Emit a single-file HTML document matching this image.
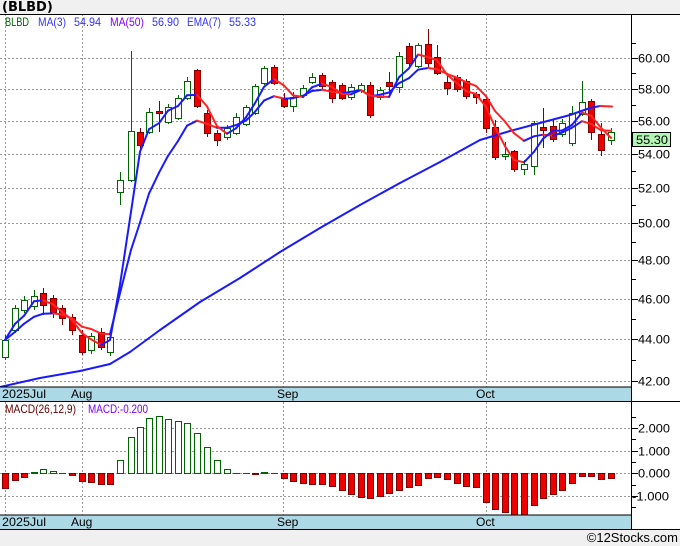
<!DOCTYPE html>
<html><head><meta charset="utf-8"><style>
html,body{margin:0;padding:0;background:#f0f0f0;}
svg{display:block;font-family:"Liberation Sans","DejaVu Sans",sans-serif;}
</style></head><body>
<svg id="s" width="680" height="546" xmlns="http://www.w3.org/2000/svg">
<rect x="0" y="0" width="680" height="546" fill="#f0f0f0"/>
<rect x="0" y="14" width="680" height="515" fill="#fff"/>
<text x="2" y="11" font-size="13" font-weight="bold" fill="#000" font-family="DejaVu Sans">(BLBD)</text>
<g id="g"></g>
<rect x="0" y="387" width="632" height="14" fill="#add8e6"/>
<rect x="0" y="515" width="632" height="14" fill="#add8e6"/>
<line x1="0" y1="14.5" x2="680" y2="14.5" stroke="#000"/>
<line x1="0" y1="387" x2="632" y2="387" stroke="#000"/>
<line x1="0" y1="401.5" x2="680" y2="401.5" stroke="#000"/>
<line x1="0" y1="515" x2="632" y2="515" stroke="#000"/>
<line x1="0" y1="529.5" x2="680" y2="529.5" stroke="#000"/>
<line x1="631.5" y1="14" x2="631.5" y2="529" stroke="#000"/>
<g font-size="12" fill="#000">
<text x="2" y="398" textLength="44" lengthAdjust="spacingAndGlyphs">2025Jul</text><text x="71" y="398">Aug</text><text x="277" y="398">Sep</text><text x="476" y="398">Oct</text>
<text x="2" y="526" textLength="44" lengthAdjust="spacingAndGlyphs">2025Jul</text><text x="71" y="526">Aug</text><text x="277" y="526">Sep</text><text x="476" y="526">Oct</text>
</g>
<g font-size="12">
<text x="5" y="26" fill="#006400" textLength="24" lengthAdjust="spacingAndGlyphs">BLBD</text>
<text x="38" y="26" fill="#3333ff" textLength="28" lengthAdjust="spacingAndGlyphs">MA(3)</text><text x="74" y="26" fill="#3333ff" textLength="27" lengthAdjust="spacingAndGlyphs">54.94</text>
<text x="110" y="26" fill="#7f00ff" textLength="34" lengthAdjust="spacingAndGlyphs">MA(50)</text><text x="152" y="26" fill="#3333ff" textLength="27" lengthAdjust="spacingAndGlyphs">56.90</text>
<text x="187" y="26" fill="#3333ff" textLength="34" lengthAdjust="spacingAndGlyphs">EMA(7)</text><text x="229" y="26" fill="#3333ff" textLength="27" lengthAdjust="spacingAndGlyphs">55.33</text>
<text x="5" y="413" fill="#660000" textLength="71" lengthAdjust="spacingAndGlyphs">MACD(26,12,9)</text>
<text x="88" y="413" fill="#7f00ff" textLength="60" lengthAdjust="spacingAndGlyphs">MACD:-0.200</text>
</g>
<text x="678" y="542" font-size="13" fill="#000" text-anchor="end">©12Stocks.com</text>
</svg>
<script>
var g=document.getElementById('g'),h='';
function Y(p){return 3766-905.6*Math.log(p);}
[60,58,56,54,52,50,48,46,44,42].forEach(function(p){var y=Math.round(Y(p))+.5;
h+='<line x1="0" y1="'+y+'" x2="632" y2="'+y+'" stroke="#999" stroke-dasharray="2,2"/>';
h+='<line x1="632" y1="'+y+'" x2="638" y2="'+y+'" stroke="#000"/>';
h+='<text x="638" y="'+(y+4)+'" font-size="12" fill="#000" textLength="32" lengthAdjust="spacingAndGlyphs">'+p.toFixed(2)+'</text>';});
[61,59,57,55,53,51,49,47,45,43].forEach(function(p){var y=Math.round(Y(p))+.5;h+='<line x1="632" y1="'+y+'" x2="636" y2="'+y+'" stroke="#000"/>';});
[5,82,283,486].forEach(function(x){h+='<line x1="'+(x+.5)+'" y1="14" x2="'+(x+.5)+'" y2="387" stroke="#999" stroke-dasharray="2,2"/><line x1="'+(x+.5)+'" y1="402" x2="'+(x+.5)+'" y2="515" stroke="#999" stroke-dasharray="2,2"/>';});
[[428,'2.000'],[451,'1.000'],[473,'0.000'],[496,'-1.000']].forEach(function(a){var y=a[0]+.5;
h+='<line x1="0" y1="'+y+'" x2="632" y2="'+y+'" stroke="#999" stroke-dasharray="2,2"/><line x1="632" y1="'+y+'" x2="638" y2="'+y+'" stroke="#000"/>';
var neg=a[1][0]=='-';
h+='<text x="'+(neg?632:638)+'" y="'+(y+4)+'" font-size="12" fill="#000" textLength="'+(neg?37:32)+'" lengthAdjust="spacingAndGlyphs">'+a[1]+'</text>';});
[417,439,462,485,507].forEach(function(y){h+='<line x1="632" y1="'+(y+.5)+'" x2="636" y2="'+(y+.5)+'" stroke="#000"/>';});
var C=[[5,'g',340,357,335,360],[15,'g',308,330,305,333],[24,'g',300,310,296,313],[34,'g',296,306,290,310],[43,'r',293,305,288,315],[53,'r',298,312,295,318],[62,'r',308,318,305,325],[72,'r',317,330,314,335],[82,'r',335,352,330,355],[91,'g',336,350,333,354],[101,'r',332,347,328,350],[110,'g',337,352,334,356],[120,'g',180,192,172,205],[131,'g',131,180,51,182],[140,'r',132,145,128,150],[149,'g',112,132,108,134],[159,'r',111,113,101,132],[168,'g',107,122,104,124],[178,'g',98,118,95,120],[187,'g',81,98,77,100],[197,'r',70,106,69,108],[207,'r',113,133,110,137],[217,'r',133,140,130,146],[227,'g',128,137,125,140],[236,'g',117,133,113,135],[246,'g',107,124,105,126],[255,'g',86,113,84,115],[264,'g',68,83,66,85],[274,'r',67,83,65,85],[284,'r',98,106,93,108],[293,'g',97,106,92,112],[303,'g',88,95,85,97],[312,'g',77,82,73,84],[322,'r',75,86,73,89],[332,'r',82,98,80,103],[342,'r',85,98,83,100],[351,'g',87,97,84,100],[361,'g',85,90,83,93],[370,'r',85,115,82,118],[380,'g',90,97,87,100],[389,'r',82,86,72,95],[399,'g',56,87,52,93],[409,'r',46,63,43,66],[418,'g',45,66,43,68],[428,'r',44,63,29,69],[437,'r',57,73,45,75],[447,'r',82,88,73,95],[457,'r',77,89,75,92],[466,'r',81,96,79,99],[476,'r',94,97,92,104],[486,'r',99,128,97,133],[495,'r',127,157,120,160],[505,'g',154,156,142,160],[514,'r',151,169,150,172],[524,'g',164,169,160,175],[534,'g',123,166,121,175],[543,'r',127,130,108,148],[553,'r',126,139,120,142],[562,'g',123,134,119,137],[572,'g',113,143,106,146],[582,'g',102,114,81,116],[591,'r',101,132,99,140],[601,'r',134,150,123,156],[611,'g',132,140,128,145]];
var M=[488,480,477,472,469,471,473,475,481,482,484,484,460,437,427,418,416,419,421,423,433,447,460,469,473,473,474,472,473,478,481,483,484,484,486,490,494,497,498,496,493,490,487,485,478,477,479,483,486,487,502,509,512,515,515,505,498,494,490,483,476,476,479,478];
var cl=[];
C.forEach(function(c,i){var x=c[0],gr=c[1]=='g';cl.push(gr?c[2]:c[3]);
var col=gr?'#006400':'#800000';
h+='<line x1="'+(x+.5)+'" y1="'+c[4]+'" x2="'+(x+.5)+'" y2="'+c[5]+'" stroke="'+col+'"/>';
var hh=Math.max(c[3]-c[2],1);
h+='<rect x="'+(x-2.5)+'" y="'+(c[2]+.5)+'" width="6" height="'+hh+'" fill="'+(gr?'#fff':'#ee0000')+'" stroke="'+col+'"/>';
var m=M[i];if(m!=undefined&&m!=473){var t=Math.min(m,473),b=Math.max(m,473);
h+='<rect x="'+(x-2.5)+'" y="'+(t+.5)+'" width="6" height="'+(b-t)+'" fill="'+(m<473?'#fff':'#ee0000')+'" stroke="'+(m<473?'#006400':'#800000')+'"/>';}
else if(m==473)h+='<line x1="'+(x-3)+'" y1="473.5" x2="'+(x+4)+'" y2="473.5" stroke="#006400"/>';});
var P=cl.map(function(y){return Math.exp((3766-y)/905.6);}),ma=[],em=[],e=P[0];
P.forEach(function(p,i){var a=P.slice(Math.max(0,i-2),i+1);ma.push(a.reduce(function(s,v){return s+v},0)/a.length);e=i?e+(p-e)*0.25:p;em.push(e);});
function seg(pts){var s='';for(var i=1;i<pts.length;i++){var a=pts[i-1],b=pts[i];var col=b[1]<=a[1]?'#1a1aff':'#ff2222';
s+='<line x1="'+a[0]+'" y1="'+a[1]+'" x2="'+b[0]+'" y2="'+b[1]+'" stroke="'+col+'" stroke-width="2" stroke-linecap="round"/>';}return s;}
function pts(arr){return arr.map(function(p,i){return [C[i][0],+Y(p).toFixed(1)]});}
h+=seg([[0,387],[40,378],[80,371],[110,364],[130,352],[160,330],[200,302],[240,278],[280,252],[320,228],[360,205],[400,183],[440,162],[480,140],[510,131],[540,123],[570,115],[590,108],[600,106],[612,106.5]]);
h+=seg(pts(em));
h+=seg(pts(ma));
h+='<rect x="632.5" y="132.5" width="38" height="14" fill="#b3f5b3" stroke="#000"/><text x="636" y="144" font-size="12" fill="#000" textLength="32" lengthAdjust="spacingAndGlyphs">55.30</text>';
g.innerHTML=h;
</script>
</body></html>
